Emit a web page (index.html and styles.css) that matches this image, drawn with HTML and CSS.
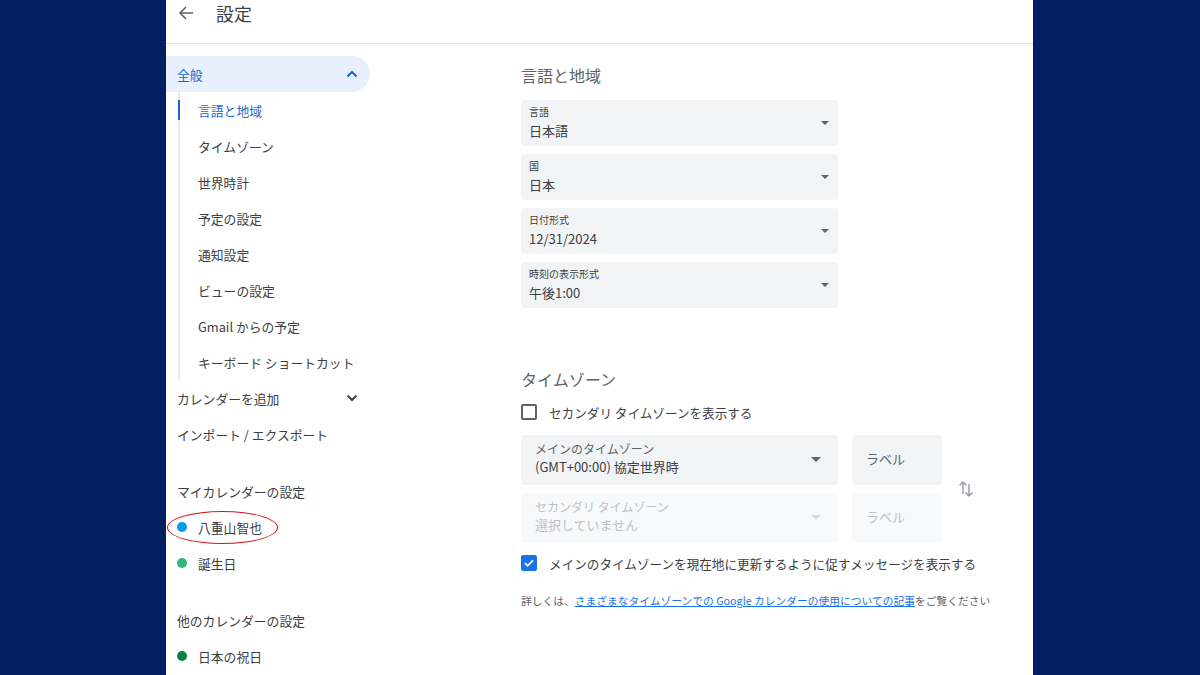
FILE: index.html
```html
<!DOCTYPE html>
<html lang="ja">
<head>
<meta charset="utf-8">
<link rel="stylesheet" href="styles.css">
</head>
<body>
<div class="panel">
  <header class="topbar">
    <svg class="back" width="16" height="16" viewBox="0 0 16 16"><path d="M15 8H2.5M8 2L2 8l6 6" fill="none" stroke="#5f6368" stroke-width="1.6"/></svg>
    <h1 class="title">設定</h1>
  </header>
  <div class="body">
    <nav class="nav">
      <div class="nav-top active">
        <span>全般</span>
        <svg width="12" height="8" viewBox="0 0 12 8"><path d="M1.5 6.5L6 2l4.5 4.5" fill="none" stroke="#1967d2" stroke-width="2"/></svg>
      </div>
      <ul class="sub">
        <li class="sub-item current">言語と地域</li>
        <li class="sub-item">タイムゾーン</li>
        <li class="sub-item">世界時計</li>
        <li class="sub-item">予定の設定</li>
        <li class="sub-item">通知設定</li>
        <li class="sub-item">ビューの設定</li>
        <li class="sub-item">Gmail からの予定</li>
        <li class="sub-item">キーボード ショートカット</li>
      </ul>
      <div class="nav-top">
        <span>カレンダーを追加</span>
        <svg width="12" height="8" viewBox="0 0 12 8"><path d="M1.5 1.5L6 6l4.5-4.5" fill="none" stroke="#3c4043" stroke-width="2"/></svg>
      </div>
      <div class="nav-top">インポート / エクスポート</div>
      <div class="nav-head">マイカレンダーの設定</div>
      <div class="cal">
        <span class="dot blue"></span>八重山智也
        <span class="mark"></span>
      </div>
      <div class="cal"><span class="dot green"></span>誕生日</div>
      <div class="nav-head">他のカレンダーの設定</div>
      <div class="cal"><span class="dot dgreen"></span>日本の祝日</div>
    </nav>
    <main class="main">
      <h2 class="heading">言語と地域</h2>
      <div class="selects">
        <div class="select"><div class="sel-text"><div class="sel-label">言語</div><div class="sel-value">日本語</div></div><span class="caret"></span></div>
        <div class="select"><div class="sel-text"><div class="sel-label">国</div><div class="sel-value">日本</div></div><span class="caret"></span></div>
        <div class="select"><div class="sel-text"><div class="sel-label">日付形式</div><div class="sel-value">12/31/2024</div></div><span class="caret"></span></div>
        <div class="select"><div class="sel-text"><div class="sel-label">時刻の表示形式</div><div class="sel-value">午後1:00</div></div><span class="caret"></span></div>
      </div>
      <h2 class="heading tz-heading">タイムゾーン</h2>
      <label class="check-row"><span class="box"></span>セカンダリ タイムゾーンを表示する</label>
      <div class="tz-grid">
        <div class="tz-rows">
          <div class="tz-row">
            <div class="tz-select"><div class="sel-text"><div class="tz-label">メインのタイムゾーン</div><div class="sel-value">(GMT+00:00) 協定世界時</div></div><span class="caret big"></span></div>
            <div class="tz-name">ラベル</div>
          </div>
          <div class="tz-row disabled">
            <div class="tz-select"><div class="sel-text"><div class="tz-label">セカンダリ タイムゾーン</div><div class="sel-value">選択していません</div></div><span class="caret big"></span></div>
            <div class="tz-name">ラベル</div>
          </div>
        </div>
        <svg class="swap" width="16" height="20" viewBox="0 0 16 20"><path d="M5 15V3M1.5 6.5L5 3l3.5 3.5M11 5v12M7.5 13.5L11 17l3.5-3.5" fill="none" stroke="#9aa0a6" stroke-width="1.5"/></svg>
      </div>
      <label class="check-row checked-row"><span class="box checked"><svg width="12" height="12" viewBox="0 0 12 12"><path d="M2 6.2l2.6 2.6L10 3.4" fill="none" stroke="#fff" stroke-width="1.8"/></svg></span>メインのタイムゾーンを現在地に更新するように促すメッセージを表示する</label>
      <p class="info">詳しくは、<a href="#">さまざまなタイムゾーンでの Google カレンダーの使用についての記事</a>をご覧ください</p>
    </main>
  </div>
</div>
</body>
</html>
```

FILE: styles.css
```css
* { box-sizing: border-box; }
html, body { margin: 0; padding: 0; }
body {
  background: #031f5f;
  font-family: "Noto Sans CJK JP", "Noto Sans", Roboto, sans-serif;
  color: #3c4043;
  width: 1200px;
  height: 675px;
  overflow: hidden;
}
.panel {
  width: 867px;
  height: 675px;
  margin-left: 166px;
  background: #fff;
  overflow: hidden;
}
.topbar {
  height: 44px;
  border-bottom: 1px solid #e0e0e0;
  display: flex;
  align-items: center;
  padding-left: 12px;
  padding-bottom: 17px;
}
.back { margin-right: 22px; }
.title {
  margin: 0;
  font-size: 18px;
  font-weight: 400;
  color: #3c4043;
  line-height: 24px;
}
.body {
  display: grid;
  grid-template-columns: 355px 1fr;
}
.nav { padding-top: 12px; position: relative; }
.nav-top {
  width: 204px;
  height: 36px;
  display: flex;
  align-items: center;
  justify-content: space-between;
  padding: 0 12px 0 11px;
  font-size: 12.8px;
  color: #3c4043;
}
.nav-top.active {
  background: #e8f0fe;
  color: #1967d2;
  border-radius: 0 18px 18px 0;
}
.sub {
  list-style: none;
  margin: 0 0 0 12px;
  padding: 0;
  border-left: 2px solid #e8eaed;
}
.sub-item {
  height: 36px;
  display: flex;
  align-items: center;
  padding-left: 18px;
  font-size: 12.8px;
  color: #3c4043;
  position: relative;
}
.sub-item.current { color: #1967d2; }
.sub-item.current::before {
  content: "";
  position: absolute;
  left: -2px;
  top: 8px;
  width: 2px;
  height: 20px;
  background: #1967d2;
}
.nav-head {
  height: 36px;
  display: flex;
  align-items: center;
  padding-left: 11px;
  margin-top: 21px;
  font-size: 12.8px;
  color: #3c4043;
}
.cal {
  height: 36px;
  display: flex;
  align-items: center;
  padding-left: 11px;
  font-size: 12.8px;
  color: #3c4043;
  position: relative;
}
.dot {
  width: 10px;
  height: 10px;
  border-radius: 50%;
  margin-right: 11px;
}
.dot.blue { background: #039be5; }
.dot.green { background: #33b679; }
.dot.dgreen { background: #0b8043; }
.mark {
  position: absolute;
  left: 1px;
  top: 2px;
  width: 111px;
  height: 33px;
  border: 1.5px solid #d4121a;
  border-radius: 50%;
}
.main { padding-top: 19px; }
.heading {
  margin: 0 0 13px;
  font-size: 16px;
  font-weight: 400;
  line-height: 24px;
  color: #5f6368;
}
.selects { display: flex; flex-direction: column; gap: 8px; }
.select {
  width: 317px;
  height: 46px;
  background: #f1f3f4;
  border-radius: 4px;
  display: flex;
  align-items: center;
  justify-content: space-between;
  padding: 0 9px 0 8px;
}
.sel-label { font-size: 10px; line-height: 14px; color: #3c4043; }
.sel-value { font-size: 13px; line-height: 20px; color: #3c4043; margin-top: 2px; }
.caret {
  width: 0; height: 0;
  border-left: 4px solid transparent;
  border-right: 4px solid transparent;
  border-top: 4px solid #5f6368;
}
.caret.big {
  border-left-width: 5px;
  border-right-width: 5px;
  border-top-width: 5px;
}
.tz-heading { margin-top: 59px; margin-bottom: 9px; }
.check-row {
  display: flex;
  align-items: center;
  height: 24px;
  font-size: 12.6px;
  color: #3c4043;
}
.box {
  width: 16px;
  height: 16px;
  border: 2px solid #5f6368;
  border-radius: 2px;
  margin-right: 12px;
  display: flex;
  align-items: center;
  justify-content: center;
}
.box.checked { background: #1a73e8; border-color: #1a73e8; }
.tz-grid {
  display: flex;
  align-items: center;
  margin-top: 11px;
}
.tz-rows { display: flex; flex-direction: column; gap: 8px; }
.tz-row { display: flex; gap: 14px; }
.tz-select {
  width: 317px;
  height: 50px;
  background: #f1f3f4;
  border-radius: 4px;
  display: flex;
  align-items: center;
  justify-content: space-between;
  padding: 0 17px 2px 14px;
}
.tz-label { font-size: 12px; line-height: 16px; color: #5f6368; }
.tz-select .sel-value { margin-top: 0; }
.tz-name {
  width: 90px;
  height: 50px;
  background: #f1f3f4;
  border-radius: 4px;
  display: flex;
  align-items: center;
  padding: 0 0 3px 14px;
  font-size: 13px;
  color: #5f6368;
}
.tz-row.disabled .tz-select,
.tz-row.disabled .tz-name { background: #f8f9fa; }
.tz-row.disabled .tz-label,
.tz-row.disabled .sel-value,
.tz-row.disabled .tz-name { color: #bdc1c6; }
.tz-row.disabled .caret { border-top-color: #dadce0; }
.swap { margin-left: 16px; }
.checked-row { margin-top: 8px; }
.info {
  margin: 18px 0 0;
  font-size: 10.75px;
  line-height: 16px;
  color: #5f6368;
}
.info a { color: #1a73e8; text-decoration: underline; }
```
